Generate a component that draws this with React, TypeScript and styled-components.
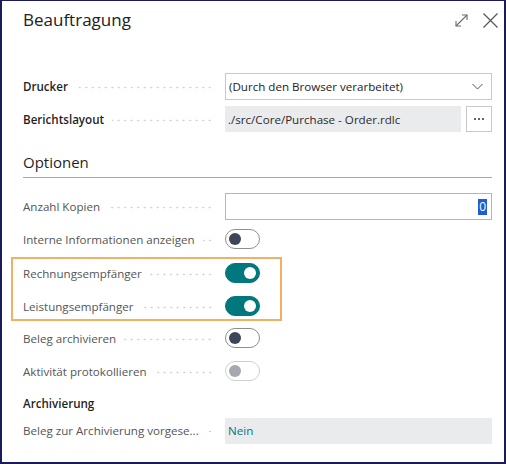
import React from 'react'
import styled, { createGlobalStyle } from 'styled-components'

const GlobalStyle = createGlobalStyle`
  html, body {
    margin: 0;
    padding: 0;
    background: #ffffff;
  }
  body {
    font-family: "Open Sans", "Noto Sans", sans-serif;
  }
`

const Frame = styled.div`
  width: 506px;
  height: 464px;
  box-sizing: border-box;
  border: 2px solid #1b1b5c;
  border-top-width: 1px;
  background: #ffffff;
  display: flex;
  flex-direction: column;
`

const Header = styled.header`
  display: flex;
  align-items: center;
  justify-content: space-between;
  height: 38px;
  padding: 0 6px 0 21px;
`

const Title = styled.h1`
  margin: 0;
  font-size: 17px;
  font-weight: 400;
  color: #212121;
  line-height: 26px;
`

const HeaderButtons = styled.div`
  display: flex;
  align-items: center;
  gap: 15px;
`

const IconButton = styled.button<{ $size: number }>`
  border: 0;
  background: none;
  padding: 0;
  width: ${p => p.$size}px;
  height: ${p => p.$size}px;
  display: flex;
  align-items: center;
  justify-content: center;
  cursor: pointer;
`

const Body = styled.div`
  display: flex;
  flex-direction: column;
  padding: 34px 12px 0 21px;
`

const Row = styled.div<{ $h?: number; $mt?: number }>`
  display: flex;
  align-items: center;
  height: ${p => p.$h ?? 24}px;
  margin-top: ${p => p.$mt ?? 0}px;
`

const LabelCell = styled.div`
  width: 202px;
  flex: none;
  display: flex;
  align-items: center;
  min-width: 0;
`

const Label = styled.span<{ $strong?: boolean }>`
  font-size: 11.6px;
  white-space: nowrap;
  color: ${p => (p.$strong ? '#1f1f1f' : '#555555')};
  font-weight: ${p => (p.$strong ? 600 : 400)};
`

const Leader = styled.span`
  flex: 1;
  height: 3px;
  margin: 2px 12px 0 8px;
  background-image: radial-gradient(circle, #cccccc 0.8px, transparent 1.1px);
  background-size: 6.5px 3px;
  background-repeat: repeat-x;
  background-position: right center;
`

const Select = styled.div`
  flex: 1;
  height: 27px;
  box-sizing: border-box;
  border: 1px solid #c8c8c8;
  display: flex;
  align-items: center;
  justify-content: space-between;
  padding: 0 8px 0 3px;
  font-size: 11.6px;
  color: #222222;
`

const ReadBox = styled.div<{ $accent?: boolean }>`
  flex: 1;
  height: 26px;
  background: #eaebec;
  display: flex;
  align-items: center;
  padding: 0 3px;
  font-size: 11.6px;
  color: ${p => (p.$accent ? '#00787c' : '#2a2a2a')};
`

const DotsButton = styled.button`
  width: 26px;
  height: 26px;
  margin-left: 5px;
  box-sizing: border-box;
  border: 1px solid #c8c8c8;
  background: #ffffff;
  display: flex;
  align-items: center;
  justify-content: center;
  gap: 2px;
  padding: 0;
`

const Dot = styled.span`
  width: 2px;
  height: 2px;
  border-radius: 50%;
  background: #333333;
`

const SectionTitle = styled.h2`
  margin: 19px 0 0;
  font-size: 15px;
  font-weight: 400;
  color: #1f1f1f;
  line-height: 22px;
  padding-bottom: 4px;
  border-bottom: 1px solid #a8a8a8;
`

const SubTitle = styled.h3`
  margin: 9px 0 0;
  height: 22px;
  display: flex;
  align-items: center;
  font-size: 11.6px;
  font-weight: 600;
  color: #1f1f1f;
`

const NumberInput = styled.div`
  flex: 1;
  height: 27px;
  box-sizing: border-box;
  border: 1px solid #86c9c9;
  display: flex;
  align-items: center;
  justify-content: flex-end;
  padding-right: 4px;
  font-size: 12px;
`

const Selected = styled.span`
  background: #1d5fd1;
  color: #ffffff;
  padding: 0 1px;
  line-height: 16px;
`

const Toggle = styled.span<{ $on?: boolean; $disabled?: boolean }>`
  width: 35px;
  height: 20px;
  box-sizing: border-box;
  border-radius: 10px;
  display: flex;
  align-items: center;
  padding: 0 3px;
  justify-content: ${p => (p.$on ? 'flex-end' : 'flex-start')};
  background: ${p => (p.$on ? '#00787d' : '#ffffff')};
  border: 1px solid ${p => (p.$on ? '#00787d' : p.$disabled ? '#cfcfcf' : '#8e8e8e')};

  &::after {
    content: '';
    width: 12px;
    height: 12px;
    border-radius: 50%;
    background: ${p => (p.$on ? '#ffffff' : p.$disabled ? '#a5a8ae' : '#3d4658')};
  }
`

const Highlight = styled.div`
  display: flex;
  flex-direction: column;
  gap: 9px;
  margin: 6px 0 -2px -12px;
  padding: 2px 0 1px 10px;
  width: 257px;
  border: 2px solid #f2b067;
`

type ToggleRowProps = { label: string; on?: boolean; disabled?: boolean; mt?: number }

const ToggleRow = ({ label, on, disabled, mt }: ToggleRowProps) => (
  <Row $mt={mt}>
    <LabelCell>
      <Label>{label}</Label>
      <Leader />
    </LabelCell>
    <Toggle $on={on} $disabled={disabled} />
  </Row>
)

export default function App() {
  return (
    <>
      <GlobalStyle />
      <Frame>
        <Header>
          <Title>Beauftragung</Title>
          <HeaderButtons>
            <IconButton $size={13} aria-label="Maximieren">
              <svg width="13" height="13" viewBox="0 0 13 13" fill="none" stroke="#6b6b6b" strokeWidth="1.1">
                <path d="M1 12 L12 1" />
                <path d="M7 1 H12 V6" />
                <path d="M1 7 V12 H6" />
              </svg>
            </IconButton>
            <IconButton $size={15} aria-label="Schließen">
              <svg width="15" height="15" viewBox="0 0 15 15" fill="none" stroke="#555555" strokeWidth="1.2">
                <path d="M0.5 0.5 L14.5 14.5 M14.5 0.5 L0.5 14.5" />
              </svg>
            </IconButton>
          </HeaderButtons>
        </Header>

        <Body>
          <Row $h={27}>
            <LabelCell>
              <Label $strong>Drucker</Label>
              <Leader />
            </LabelCell>
            <Select>
              <span>(Durch den Browser verarbeitet)</span>
              <svg width="11" height="7" viewBox="0 0 11 7" fill="none" stroke="#555555" strokeWidth="1">
                <path d="M0.5 1 L5.5 6 L10.5 1" />
              </svg>
            </Select>
          </Row>
          <Row $h={26} $mt={6}>
            <LabelCell>
              <Label $strong>Berichtslayout</Label>
              <Leader />
            </LabelCell>
            <ReadBox>./src/Core/Purchase - Order.rdlc</ReadBox>
            <DotsButton aria-label="Auswählen">
              <Dot />
              <Dot />
              <Dot />
            </DotsButton>
          </Row>

          <SectionTitle>Optionen</SectionTitle>

          <Row $h={27} $mt={15}>
            <LabelCell>
              <Label>Anzahl Kopien</Label>
              <Leader />
            </LabelCell>
            <NumberInput>
              <Selected>0</Selected>
            </NumberInput>
          </Row>
          <ToggleRow label="Interne Informationen anzeigen" mt={7} />

          <Highlight>
            <ToggleRow label="Rechnungsempfänger" on />
            <ToggleRow label="Leistungsempfänger" on />
          </Highlight>

          <ToggleRow label="Beleg archivieren" mt={7} />
          <ToggleRow label="Aktivität protokollieren" disabled mt={9} />

          <SubTitle>Archivierung</SubTitle>
          <Row $h={25} $mt={4}>
            <LabelCell>
              <Label>Beleg zur Archivierung vorgese...</Label>
              <Leader />
            </LabelCell>
            <ReadBox $accent>Nein</ReadBox>
          </Row>
        </Body>
      </Frame>
    </>
  )
}
